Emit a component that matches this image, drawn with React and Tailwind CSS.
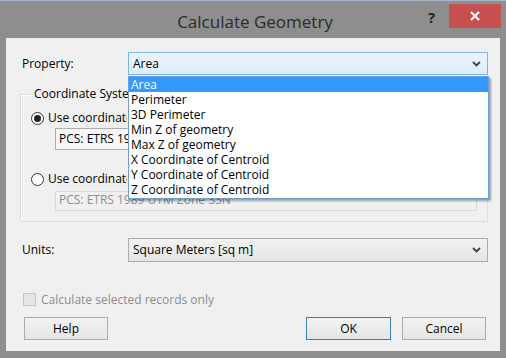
export default function App() {
  const Chevron = () => (
    <svg width="9" height="6" viewBox="0 0 9 6" className="block">
      <path d="M1 1 L4.5 4.5 L8 1" fill="none" stroke="#404040" strokeWidth="1.8" />
    </svg>
  );
  const items = [
    "Area",
    "Perimeter",
    "3D Perimeter",
    "Min Z of geometry",
    "Max Z of geometry",
    "X Coordinate of Centroid",
    "Y Coordinate of Centroid",
    "Z Coordinate of Centroid",
  ];
  return (
    <div className="w-[506px] h-[358px] bg-[#8e8e8e] overflow-hidden font-['Open_Sans','Noto_Sans',sans-serif] border-t border-[#a9b7c6]">
      {/* Title bar */}
      <div className="relative h-[37px] flex items-center justify-center">
        <span className="text-[17px] text-[#2b2b2b] pl-[4px] pt-[4px]">Calculate Geometry</span>
        <span className="absolute left-[428px] top-[5px] text-[15px] font-bold text-[#222]">?</span>
        <div className="absolute left-[449px] top-[3px] w-[52px] h-[24px] bg-[#c75050] flex items-center justify-center">
          <svg width="10" height="10" viewBox="0 0 10 10">
            <path d="M1 1 L9 9 M9 1 L1 9" stroke="#fff" strokeWidth="2" />
          </svg>
        </div>
      </div>
      {/* Client */}
      <div className="relative mx-[6px] h-[313px] bg-[#f0f0f0] text-[12px] text-black flex flex-col">
        {/* Property row */}
        <div className="mt-[14px] flex items-center h-[23px]">
          <div className="w-[122px] pl-[16px]">Property:</div>
          <div className="w-[360px] h-[23px] border border-[#7eb4ea] bg-gradient-to-b from-[#ecf4fc] to-[#dcecfc] flex items-center justify-between pl-[4px] pr-[6px]">
            <span>Area</span>
            <Chevron />
          </div>
        </div>
        {/* Group box */}
        <div className="relative mt-[19px] ml-[14px] w-[468px] h-[128px] border border-[#dcdcdc] shadow-[inset_1px_1px_0_#ffffff]">
          <div className="absolute -top-[10px] left-[10px] w-[98px] px-[3px] bg-[#f0f0f0] leading-[18px] whitespace-nowrap overflow-hidden">Coordinate System</div>
          <div className="mt-[16px] ml-[10px] flex items-center h-[14px]">
            <div className="w-[13px] h-[13px] rounded-full border border-[#333] bg-white flex items-center justify-center">
              <div className="w-[7px] h-[7px] rounded-full bg-[#222]" />
            </div>
            <span className="ml-[4px] w-[79px] whitespace-nowrap overflow-hidden">Use coordinate system of the data source</span>
          </div>
          <div className="mt-[3px] ml-[34px] w-[422px] h-[22px] border border-[#abadb3] bg-[#f7f7f7] flex items-center pl-[3px]">
            <span className="w-[69px] whitespace-nowrap overflow-hidden">PCS: ETRS 1989 UTM Zone 33N</span>
          </div>
          <div className="mt-[22px] ml-[10px] flex items-center h-[14px]">
            <div className="w-[13px] h-[13px] rounded-full border border-[#333] bg-white" />
            <span className="ml-[4px] w-[79px] whitespace-nowrap overflow-hidden">Use coordinate system of the data frame</span>
          </div>
          <div className="mt-[5px] ml-[34px] w-[422px] h-[20px] border border-[#d9d9d9] bg-[#f0f0f0] flex items-start pl-[3px] text-[#8d8d8d] leading-[16px]">
            PCS: ETRS 1989 UTM Zone 33N
          </div>
        </div>
        {/* Units row */}
        <div className="mt-[16px] flex items-center h-[24px]">
          <div className="w-[122px] pl-[16px]">Units:</div>
          <div className="w-[360px] h-[24px] border border-[#acacac] bg-gradient-to-b from-[#f2f2f2] to-[#e5e5e5] flex items-center justify-between pl-[4px] pr-[6px]">
            <span>Square Meters [sq m]</span>
            <Chevron />
          </div>
        </div>
        {/* Checkbox */}
        <div className="mt-[31px] ml-[17px] flex items-center h-[13px]">
          <div className="w-[13px] h-[13px] border border-[#c4c4c4] bg-[#e6e6e6]" />
          <span className="ml-[5px] text-[#8d8d8d]">Calculate selected records only</span>
        </div>
        {/* Buttons */}
        <div className="mt-[11px] flex h-[23px]">
          <div className="ml-[18px] w-[84px] h-[23px] border border-[#acacac] bg-gradient-to-b from-[#f2f2f2] to-[#e5e5e5] flex items-center justify-center">Help</div>
          <div className="ml-[198px] w-[85px] h-[23px] border border-[#3c7fb1] bg-gradient-to-b from-[#f2f2f2] to-[#e5e5e5] flex items-center justify-center">OK</div>
          <div className="ml-[11px] w-[84px] h-[23px] border border-[#acacac] bg-gradient-to-b from-[#f2f2f2] to-[#e5e5e5] flex items-center justify-center">Cancel</div>
        </div>
        {/* Dropdown list */}
        <div className="absolute left-[122px] top-[38px] w-[361px] h-[123px] bg-white border border-[#6d9fd5] shadow-[2px_2px_2px_rgba(0,0,0,0.35)] flex flex-col">
          {items.map((it, i) => (
            <div
              key={it}
              className={
                i === 0
                  ? "h-[15px] leading-[15px] pl-[2px] bg-[#3399ff] text-white"
                  : "h-[15px] leading-[15px] pl-[2px] text-black"
              }
            >
              {it}
            </div>
          ))}
        </div>
      </div>
    </div>
  );
}
